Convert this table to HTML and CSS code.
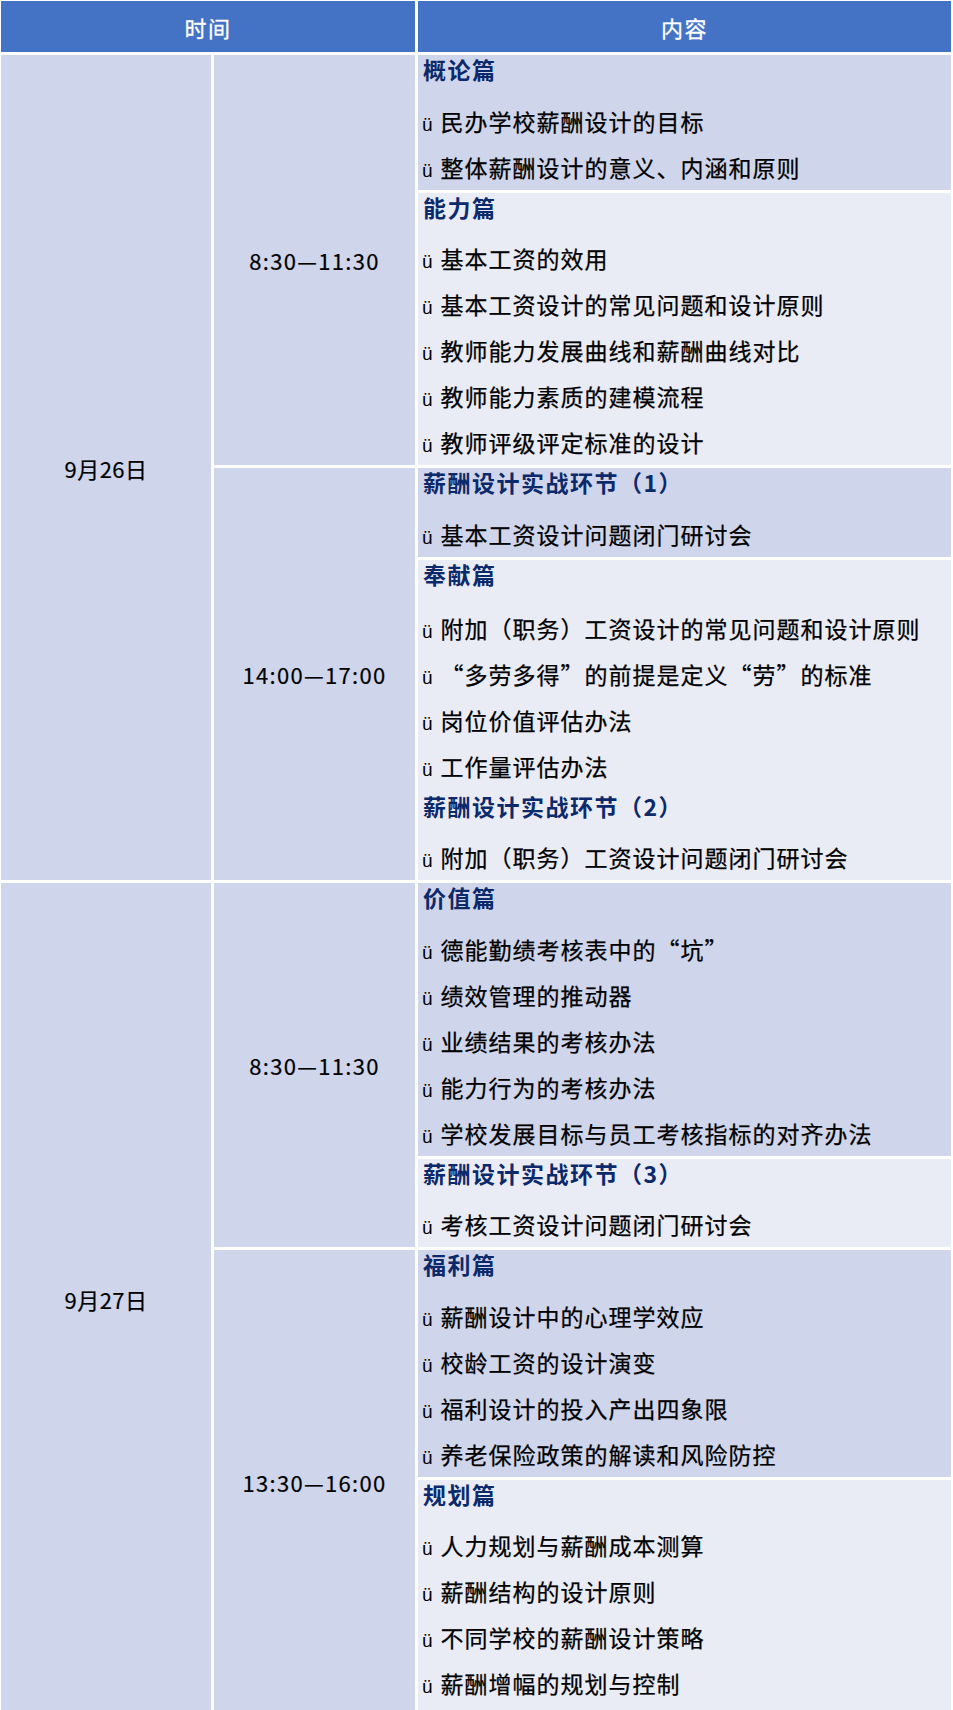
FILE: index.html
```html
<!DOCTYPE html>
<html lang="zh-CN">
<head>
<meta charset="utf-8">
<title>课程安排</title>
<link rel="stylesheet" href="styles.css">
</head>
<body>
<div class="sched">
  <div class="hd hd-time">时间</div>
  <div class="hd hd-content">内容</div>

  <div class="date d1">9月26日</div>
  <div class="time t1">8:30—11:30</div>
  <div class="time t2">14:00—17:00</div>
  <div class="date d2">9月27日</div>
  <div class="time t3">8:30—11:30</div>
  <div class="time t4">13:30—16:00</div>

  <div class="row dark">
    <div class="h">概论篇</div>
    <div class="i"><span class="b">ü</span>民办学校薪酬设计的目标</div>
    <div class="i"><span class="b">ü</span>整体薪酬设计的意义、内涵和原则</div>
  </div>
  <div class="row light">
    <div class="h">能力篇</div>
    <div class="i"><span class="b">ü</span>基本工资的效用</div>
    <div class="i"><span class="b">ü</span>基本工资设计的常见问题和设计原则</div>
    <div class="i"><span class="b">ü</span>教师能力发展曲线和薪酬曲线对比</div>
    <div class="i"><span class="b">ü</span>教师能力素质的建模流程</div>
    <div class="i"><span class="b">ü</span>教师评级评定标准的设计</div>
  </div>
  <div class="row dark">
    <div class="h">薪酬设计实战环节（1）</div>
    <div class="i"><span class="b">ü</span>基本工资设计问题闭门研讨会</div>
  </div>
  <div class="row light tall">
    <div class="h">奉献篇</div>
    <div class="i"><span class="b">ü</span>附加（职务）工资设计的常见问题和设计原则</div>
    <div class="i"><span class="b">ü</span>“多劳多得”的前提是定义“劳”的标准</div>
    <div class="i"><span class="b">ü</span>岗位价值评估办法</div>
    <div class="i"><span class="b">ü</span>工作量评估办法</div>
    <div class="h h2">薪酬设计实战环节（2）</div>
    <div class="i"><span class="b">ü</span>附加（职务）工资设计问题闭门研讨会</div>
  </div>

  <div class="row dark">
    <div class="h">价值篇</div>
    <div class="i"><span class="b">ü</span>德能勤绩考核表中的“坑”</div>
    <div class="i"><span class="b">ü</span>绩效管理的推动器</div>
    <div class="i"><span class="b">ü</span>业绩结果的考核办法</div>
    <div class="i"><span class="b">ü</span>能力行为的考核办法</div>
    <div class="i"><span class="b">ü</span>学校发展目标与员工考核指标的对齐办法</div>
  </div>
  <div class="row light">
    <div class="h">薪酬设计实战环节（3）</div>
    <div class="i"><span class="b">ü</span>考核工资设计问题闭门研讨会</div>
  </div>
  <div class="row dark">
    <div class="h">福利篇</div>
    <div class="i"><span class="b">ü</span>薪酬设计中的心理学效应</div>
    <div class="i"><span class="b">ü</span>校龄工资的设计演变</div>
    <div class="i"><span class="b">ü</span>福利设计的投入产出四象限</div>
    <div class="i"><span class="b">ü</span>养老保险政策的解读和风险防控</div>
  </div>
  <div class="row light last">
    <div class="h">规划篇</div>
    <div class="i"><span class="b">ü</span>人力规划与薪酬成本测算</div>
    <div class="i"><span class="b">ü</span>薪酬结构的设计原则</div>
    <div class="i"><span class="b">ü</span>不同学校的薪酬设计策略</div>
    <div class="i"><span class="b">ü</span>薪酬增幅的规划与控制</div>
  </div>
</div>
</body>
</html>
```

FILE: styles.css
```css
html, body {
  margin: 0;
  padding: 0;
  background: #ffffff;
}

body {
  font-family: "Noto Sans CJK SC", "Noto Sans", sans-serif;
  color: #000000;
}

.sched {
  display: grid;
  grid-template-columns: 210px 201px 1fr;
  column-gap: 3px;
  row-gap: 3px;
  padding: 1px 2px 0 1px;
}

.hd {
  background: #4472c4;
  color: #ffffff;
  height: 51px;
  display: flex;
  align-items: center;
  justify-content: center;
  font-size: 22px;
  letter-spacing: 1.5px;
  -webkit-text-stroke: 0.3px #ffffff;
}

.hd-time { grid-column: 1 / 3; grid-row: 1; }
.hd-content { grid-column: 3; grid-row: 1; }

.date, .time {
  background: #cfd5ea;
  display: flex;
  align-items: center;
  justify-content: center;
  font-size: 22px;
  line-height: 1;
  -webkit-text-stroke: 0.2px #000000;
}

.date { grid-column: 1; letter-spacing: 0.5px; }
.time { grid-column: 2; letter-spacing: 1.3px; }

.d1 { grid-row: 2 / 6; }
.t1 { grid-row: 2 / 4; }
.t2 { grid-row: 4 / 6; }
.d2 { grid-row: 6 / 10; }
.t3 { grid-row: 6 / 8; }
.t4 { grid-row: 8 / 10; }

.row {
  grid-column: 3;
  padding-left: 4px;
}

.dark { background: #cfd5ea; }
.light { background: #e9ebf5; }

.h {
  font-size: 23px;
  font-weight: 700;
  color: #0c2a6b;
  letter-spacing: 1.5px;
  line-height: 28px;
  height: 28px;
  padding-bottom: 2px;
  margin-bottom: 12.5px;
  padding-left: 1px;
  white-space: nowrap;
}

.tall .h { margin-bottom: 15px; }
.tall .h2 { margin-top: 3px; margin-bottom: 12.5px; }

.i {
  font-size: 23px;
  line-height: 46px;
  height: 46px;
  letter-spacing: 1px;
  white-space: nowrap;
  -webkit-text-stroke: 0.25px #000000;
}

.b {
  font-family: "Liberation Sans", Arial, sans-serif;
  font-size: 19px;
  line-height: 1;
  letter-spacing: 0;
  margin-right: 8px;
  -webkit-text-stroke: 0;
}

.last { padding-bottom: 8px; }
```
